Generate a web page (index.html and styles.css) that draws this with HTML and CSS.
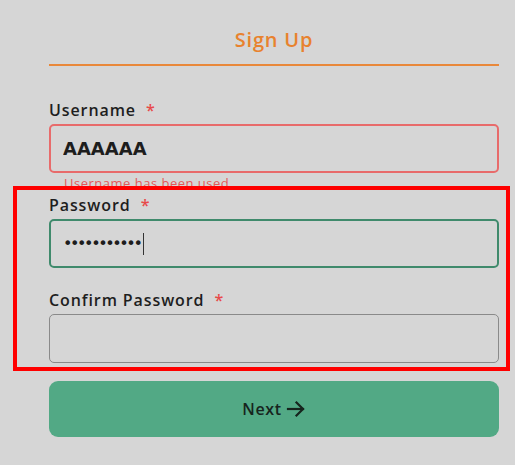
FILE: index.html
```html
<!DOCTYPE html>
<html lang="en">
<head>
<meta charset="utf-8">
<title>Sign Up</title>
<link rel="stylesheet" href="styles.css">
</head>
<body>
<main class="card">
  <h1 class="title">Sign Up</h1>
  <form class="form" onsubmit="return false">
    <div class="field field-error">
      <label class="label" for="username">Username <span class="req">*</span></label>
      <input class="input input-invalid input-user" id="username" type="text" value="AAAAAA">
      <div class="error">Username has been used.</div>
    </div>
    <div class="field">
      <label class="label" for="password">Password <span class="req">*</span></label>
      <div class="input input-valid input-pass"><span class="dots">•••••••••••</span><span class="caret"></span></div>
    </div>
    <div class="field">
      <label class="label" for="confirm">Confirm Password <span class="req">*</span></label>
      <input class="input" id="confirm" type="password">
    </div>
    <button class="next" type="submit">Next
      <svg class="arrow" width="20" height="18" viewBox="0 0 20 18" fill="none" stroke="currentColor" stroke-width="2.2" stroke-linecap="square"><path d="M2 9H17"/><path d="M10.5 2.5L17 9L10.5 15.5"/></svg>
    </button>
  </form>
</main>
<div class="highlight"></div>
</body>
</html>
```
FILE: styles.css
```css
* { box-sizing: border-box; }
html, body { margin: 0; height: 100%; }
body {
  background: #d6d6d6;
  font-family: "Open Sans", "Liberation Sans", sans-serif;
  color: #1e1e1e;
  overflow: hidden;
}
.card {
  width: 450px;
  margin-left: 49px;
  padding-top: 28px;
}
.title {
  margin: 0;
  text-align: center;
  font-size: 20px;
  font-weight: 600;
  line-height: 24px;
  letter-spacing: 0.8px;
  color: #e8822e;
}
.title::after {
  content: "";
  display: block;
  height: 2px;
  background: #e9883a;
  margin-top: 12px;
}
.form {
  display: flex;
  flex-direction: column;
  padding-top: 34px;
}
.field {
  display: flex;
  flex-direction: column;
  margin-bottom: 22px;
}
.field-error { margin-bottom: 0; }
.label {
  font-size: 16px;
  font-weight: 600;
  line-height: 20px;
  margin-bottom: 4px;
  letter-spacing: 0.9px;
}
.req {
  color: #e84a4a;
  margin-left: 5px;
}
.input {
  height: 49px;
  width: 100%;
  border: 1.5px solid #8a8a8a;
  border-radius: 5px;
  background: transparent;
  padding: 0 12px;
  font-family: "DejaVu Sans", sans-serif;
  outline: none;
}
.input-invalid { border: 2px solid #e86b6b; }
.input-user {
  font-size: 18px;
  font-weight: 700;
  color: #1d1d1d;
}
.input-valid {
  border: 2px solid #3f8a6c;
  display: flex;
  align-items: center;
}
.dots {
  font-family: "DejaVu Sans", sans-serif;
  font-size: 16px;
  color: #1d1d1d;
  letter-spacing: -2.4px;
}
.caret {
  width: 1px;
  height: 22px;
  background: #333;
  margin-left: 3px;
}
.error {
  font-size: 13px;
  line-height: 16px;
  letter-spacing: 0.5px;
  color: #e35a5a;
  padding-left: 15px;
  margin: 2px 0 4px;
}
.next {
  margin-top: -4px;
  height: 56px;
  width: 100%;
  border: none;
  border-radius: 9px;
  background: #52a985;
  color: #16241d;
  font-family: "Open Sans", "Liberation Sans", sans-serif;
  font-size: 16px;
  font-weight: 600;
  letter-spacing: 0.6px;
  display: flex;
  align-items: center;
  justify-content: center;
  gap: 4px;
  padding: 0;
}
.arrow { display: block; margin-top: -1px; }
.highlight {
  position: absolute;
  left: 13px;
  top: 186px;
  width: 497px;
  height: 185px;
  border: 4px solid #ff0000;
  pointer-events: none;
}
```
